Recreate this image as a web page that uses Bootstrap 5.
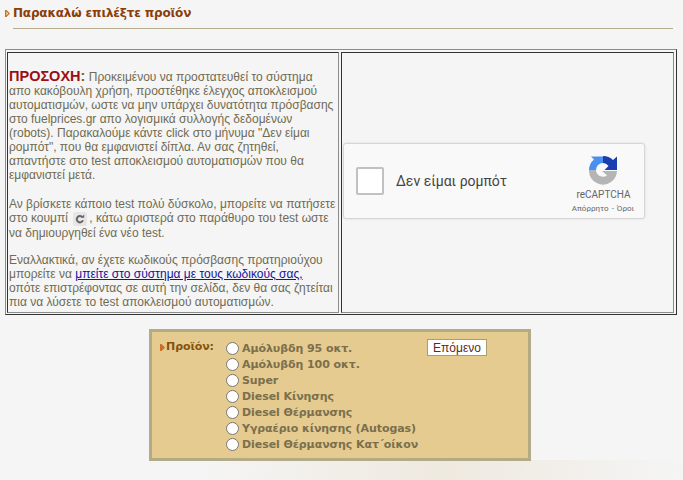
<!DOCTYPE html>
<html lang="el">
<head>
<meta charset="utf-8">
<title>Παρακαλώ επιλέξτε προϊόν</title>
<link href="https://cdn.jsdelivr.net/npm/bootstrap@5.3.0/dist/css/bootstrap.min.css" rel="stylesheet">
<style>
html,body{height:480px;overflow:hidden}
body{background:#f5f5f5;font-family:"Liberation Sans",Arial,sans-serif;font-size:12px;line-height:14px;color:#706b52;position:relative}
.page-wrap{padding:6px 6px 0 4px;position:relative}
.page-title{font-family:"DejaVu Sans",Verdana,sans-serif;font-weight:700;font-size:12px;letter-spacing:-.17px;line-height:14px;color:#8b3d0a;height:14px;margin:0;padding-left:1px;display:flex;align-items:center;gap:3px}
.title-rule{height:1px;background:#b5ad8e;margin:8px 0 0 9px;width:660px}
.outer-box{margin:20px 0 0 1px;height:266px;width:672px;border:1px solid;border-color:#8c8c8c #333 #333 #8c8c8c;padding:2px 2px 1px 1px;gap:2px}
.cell-box{border:1px solid;border-color:#333 #8c8c8c #8c8c8c #333}
.cell-left{width:332px;flex:none;padding:16px 2px 0 1px}
.cell-left p{margin:0 0 15px}
.cell-left p.para-two{margin-bottom:13px}
.cell-right{width:333px;flex:none;padding:0 1px}
.warn{font-size:14.5px;font-weight:700;color:#9a0e14}
.warn em{font-style:normal;color:#8a5a10}
.inline-reload{display:inline-block;vertical-align:-4px;margin:0 2px}
.captcha-box{width:302px;height:76px;background:#f9f9f9;border:1px solid #d6d6d6;border-radius:3px;box-shadow:0 0 3px rgba(0,0,0,.1);margin-top:90px;font-family:Roboto,"Liberation Sans",sans-serif;color:#555;padding-left:12px;position:relative}
.captcha-check{width:28px;height:28px;background:#fff;border:2px solid #c1c1c1;border-radius:2px;margin-right:12px;flex:none}
.captcha-label{font-size:14px;color:#444}
.captcha-brand{position:absolute;left:224px;top:10px;width:70px;text-align:center}
.captcha-logo{display:block;margin:0 auto}
.captcha-name{font-size:10px;line-height:12px;color:#666;margin-top:3px;padding-left:1px}
.captcha-links{font-size:8px;line-height:10px;color:#666;margin-top:3px;white-space:nowrap;word-spacing:1px}
.pick-form{width:382px;height:132px;margin:14px 0 0 145px;background:#e5cb8f;border:3px solid #b3ab85;padding:7px 0 0 8px;font-family:"DejaVu Sans",Verdana,sans-serif;font-weight:700;font-size:11px;letter-spacing:-.07px;line-height:16px;color:#7b6f4d}
.pick-label{color:#85520f;width:66px;flex:none;font-size:11px;line-height:14px;display:flex;align-items:center;gap:1px;height:14px;margin-top:1px}
.pick-list{width:199px;flex:none;padding-top:2px}
.pick-row{height:16px;display:flex;align-items:center;white-space:nowrap;gap:3px}
.pick-radio{appearance:none;width:13px;height:13px;margin:0 0 2px;background:#fff;border:1px solid #767676;border-radius:50%;flex:none}
.next-btn{font-family:"Liberation Sans",Arial,sans-serif;font-weight:400;font-size:12px;letter-spacing:0;line-height:14px;height:17px;width:60px;padding:0;background:#fff;color:#5a2d1a;border:1px solid #a89d73;border-radius:0;margin:0 0 0 2px}
.bottom-sheen{position:absolute;left:200px;right:0;bottom:0;height:20px;background:linear-gradient(100deg,rgba(245,245,245,0),rgba(236,228,214,.7) 50%,rgba(245,245,245,0))}
a.login-link{color:#14149c}
</style>
</head>
<body>
<div class="bottom-sheen"></div>
<div class="page-wrap">
  <h1 class="page-title"><svg width="5" height="7" viewBox="0 0 5 7"><path d="M0 0h1.500L5 3.500 1.500 7H0z" fill="#c8702a"/><path d="M1.300 1.500 3.400 3.500 1.300 5.500z" fill="#f3d9a6"/></svg>Παρακαλώ επιλέξτε προϊόν</h1>
  <div class="title-rule"></div>
  <div class="outer-box d-flex">
    <div class="cell-box cell-left">
      <p><span class="warn">ΠΡΟΣΟΧΗ<em>:</em></span> Προκειμένου να προστατευθεί το σύστημα απο κακόβουλη χρήση, προστέθηκε έλεγχος αποκλεισμού αυτοματισμών, ωστε να μην υπάρχει δυνατότητα πρόσβασης στο fuelprices.gr απο λογισμικά συλλογής δεδομένων (robots). Παρακαλούμε κάντε click στο μήνυμα "Δεν είμαι ρομπότ", που θα εμφανιστεί δίπλα. Αν σας ζητηθεί, απαντήστε στο test αποκλεισμού αυτοματισμών που θα εμφανιστεί μετά.</p>
      <p class="para-two">Αν βρίσκετε κάποιο test πολύ δύσκολο, μπορείτε να πατήσετε στο κουμπί <svg class="inline-reload" width="14" height="14" viewBox="0 0 14 14"><rect width="14" height="14" rx="2" fill="#e6e6e6"/><path d="M9.500 5.200A3.200 3.200 0 1 0 10 8.200" fill="none" stroke="#666" stroke-width="2"/><path d="M7.800 5.800h3.400V2.400z" fill="#666"/></svg>, κάτω αριστερά στο παράθυρο του test ωστε να δημιουργηθεί ένα νέο test.</p>
      <p class="mb-0">Εναλλακτικά, αν έχετε κωδικούς πρόσβασης πρατηριούχου μπορείτε να <a class="login-link" href="#">μπείτε στο σύστημα με τους κωδικούς σας,</a> οπότε επιστρέφοντας σε αυτή την σελίδα, δεν θα σας ζητείται πια να λύσετε το test αποκλεισμού αυτοματισμών.</p>
    </div>
    <div class="cell-box cell-right">
      <div class="captcha-box d-flex align-items-center">
        <span class="captcha-check"></span>
        <span class="captcha-label">Δεν είμαι ρομπότ</span>
        <div class="captcha-brand">
          <svg class="captcha-logo" width="32" height="32" viewBox="0 0 32 32">
            <path d="M2 16A14 14 0 0 1 7 5.500L4 2.500H16V9A7 7 0 0 0 9 16z" fill="#4a90f0"/>
            <path d="M16 2A14 14 0 0 1 26 6L30 2.500V16H17.500L21.500 12A7.500 7.500 0 0 0 16 9z" fill="#1a3db0"/>
            <path d="M2 16H9A7 7 0 0 0 20 21.500L15 17H30A14 14 0 0 1 24 28 14 14 0 0 1 2 17z" fill="#b5b5b5"/>
          </svg>
          <div class="captcha-name">reCAPTCHA</div>
          <div class="captcha-links">Απόρρητο - Όροι</div>
        </div>
      </div>
    </div>
  </div>
  <form class="pick-form d-flex">
    <div class="pick-label"><svg width="5" height="7" viewBox="0 0 5 7"><path d="M0 0h1.500L5 3.500 1.500 7H0z" fill="#c8702a"/></svg>Προϊόν:</div>
    <div class="pick-list">
      <label class="pick-row"><input class="pick-radio" type="radio" name="p">Αμόλυβδη 95 οκτ.</label>
      <label class="pick-row"><input class="pick-radio" type="radio" name="p">Αμόλυβδη 100 οκτ.</label>
      <label class="pick-row"><input class="pick-radio" type="radio" name="p">Super</label>
      <label class="pick-row"><input class="pick-radio" type="radio" name="p">Diesel Κίνησης</label>
      <label class="pick-row"><input class="pick-radio" type="radio" name="p">Diesel Θέρμανσης</label>
      <label class="pick-row"><input class="pick-radio" type="radio" name="p">Υγραέριο κίνησης (Autogas)</label>
      <label class="pick-row"><input class="pick-radio" type="radio" name="p">Diesel Θέρμανσης Κατ΄οίκον</label>
    </div>
    <div><button class="next-btn" type="button">Επόμενο</button></div>
  </form>
</div>
<script src="https://cdn.jsdelivr.net/npm/bootstrap@5.3.0/dist/js/bootstrap.bundle.min.js"></script>
</body>
</html>
